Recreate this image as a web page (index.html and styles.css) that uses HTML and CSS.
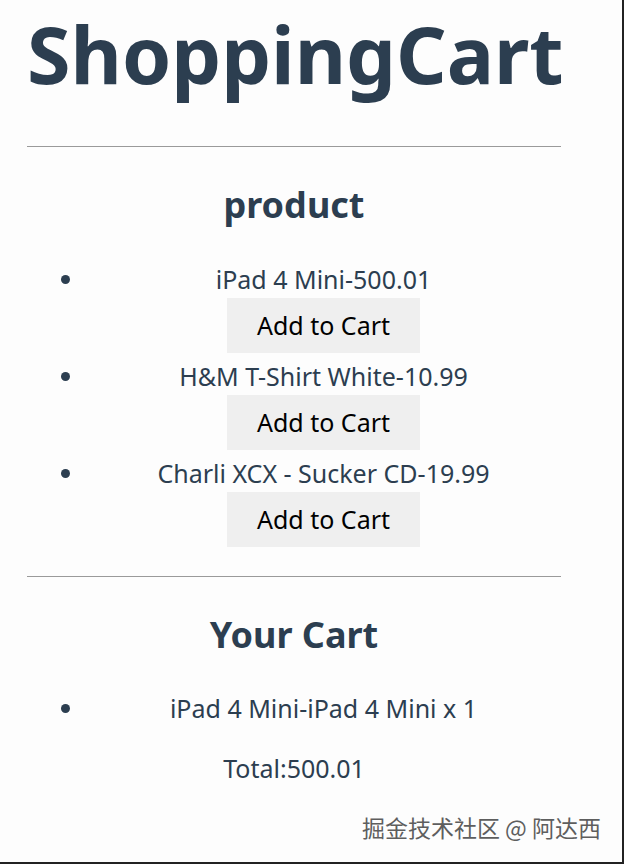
FILE: index.html
```html
<!DOCTYPE html>
<html lang="en">
<head>
  <meta charset="UTF-8" />
  <title>ShoppingCart</title>
  <link rel="stylesheet" href="styles.css">
</head>
<body>
  <div class="frame">
    <div id="app">
      <h1>ShoppingCart</h1>
      <hr class="hr-top" />
      <h2>product</h2>
      <ul class="list products">
        <li>
          iPad 4 Mini-500.01
          <button>Add to Cart</button>
        </li>
        <li>
          H&amp;M T-Shirt White-10.99
          <button>Add to Cart</button>
        </li>
        <li>
          Charli XCX - Sucker CD-19.99
          <button>Add to Cart</button>
        </li>
      </ul>
      <hr class="hr-mid" />
      <h2>Your Cart</h2>
      <ul class="list cart">
        <li>iPad 4 Mini-iPad 4 Mini x 1</li>
      </ul>
      <div class="total">Total:500.01</div>
    </div>
    <div class="watermark">掘金技术社区 @ 阿达西</div>
  </div>
</body>
</html>
```

FILE: styles.css
```css
html, body {
  margin: 0;
  padding: 0;
}

body {
  background-color: #fdfdfd;
  font-family: 'Noto Sans', 'Open Sans', sans-serif;
}

.frame {
  position: relative;
  height: 864px;
  box-sizing: border-box;
  border-right: 2px solid #222;
  border-bottom: 2px solid #222;
  overflow: hidden;
}

#app {
  width: 534px;
  margin-left: 27px;
  text-align: center;
  color: #2c3e50;
}

h1 {
  font-size: 79px;
  line-height: 108px;
  font-weight: bold;
  margin: 0;
  white-space: nowrap;
}

hr {
  border: 0;
  border-top: 1px solid #9a9a9a;
  margin: 0;
}

.hr-top {
  margin-top: 38px;
}

.hr-mid {
  margin-top: 29px;
}

h2 {
  font-size: 36px;
  line-height: 43px;
  margin: 36px 0 34px;
}

.products {
  padding-top: 1px;
}

.list {
  margin: 0;
  padding-left: 59px;
  font-size: 25px;
  line-height: 36px;
}

.list li {
  margin-bottom: 5px;
}

.cart {
  margin-bottom: 24px;
}

button {
  display: block;
  margin: 1px auto 0;
  padding: 11px 30px;
  border: none;
  background-color: #efefef;
  color: #000;
  font-family: inherit;
  font-size: 25px;
  line-height: 33px;
}

.total {
  font-size: 25px;
  line-height: 36px;
}

.watermark {
  position: absolute;
  right: 21px;
  bottom: 18px;
  font-family: 'Noto Sans CJK SC', sans-serif;
  font-size: 23px;
  color: #5e5e5e;
  text-shadow: 0 0 2px #fff, 0 0 2px #fff;
}
```
